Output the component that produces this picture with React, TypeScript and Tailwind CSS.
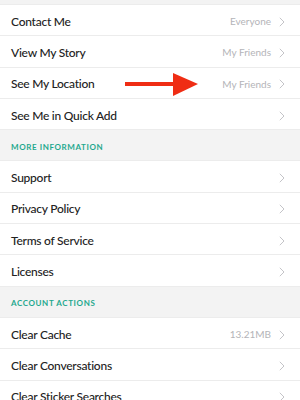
import React from "react";

type Row = { label: string; value?: string };

const Chevron = () => (
  <svg width="6" height="10" viewBox="0 0 6 10" className="shrink-0">
    <path d="M0.8 0.8 L5 5 L0.8 9.2" fill="none" stroke="#c4c4c8" strokeWidth="1" />
  </svg>
);

const RowItem = ({ label, value }: Row) => (
  <div className="flex h-[31.3px] items-center justify-between border-b border-[#ececec] bg-white pl-[11px] pr-[15px] pt-[3px]">
    <span className="text-[12px] font-medium tracking-[-0.25px] text-[#222222]">{label}</span>
    <div className="flex items-center gap-[8px]">
      {value && <span className="text-[10px] text-[#b4b4b8]">{value}</span>}
      <Chevron />
    </div>
  </div>
);

const Header = ({ title }: { title: string }) => (
  <div className="flex h-[31.3px] items-center border-b border-[#ececec] bg-[#f3f3f3] pl-[11px] pt-[3px]">
    <span className="text-[8px] font-bold tracking-[0.6px] text-[#1fa88e]">{title}</span>
  </div>
);

export default function App() {
  return (
    <div
      className="relative h-[400px] w-[300px] overflow-hidden bg-white"
      style={{ fontFamily: "Lato, 'Noto Sans', sans-serif" }}
    >
      <div className="h-[5px] border-b border-[#ececec] bg-[#f3f3f3]" />
      <RowItem label="Contact Me" value="Everyone" />
      <RowItem label="View My Story" value="My Friends" />
      <RowItem label="See My Location" value="My Friends" />
      <RowItem label="See Me in Quick Add" />
      <Header title="MORE INFORMATION" />
      <RowItem label="Support" />
      <RowItem label="Privacy Policy" />
      <RowItem label="Terms of Service" />
      <RowItem label="Licenses" />
      <Header title="ACCOUNT ACTIONS" />
      <RowItem label="Clear Cache" value="13.21MB" />
      <RowItem label="Clear Conversations" />
      <RowItem label="Clear Sticker Searches" />
      <svg
        className="absolute left-[124px] top-[72px]"
        width="76"
        height="25"
        viewBox="0 0 76 25"
      >
        <rect x="1" y="10" width="49" height="4" fill="#ef2d14" />
        <polygon points="49,1 74,12 49,24" fill="#ef2d14" />
      </svg>
    </div>
  );
}
